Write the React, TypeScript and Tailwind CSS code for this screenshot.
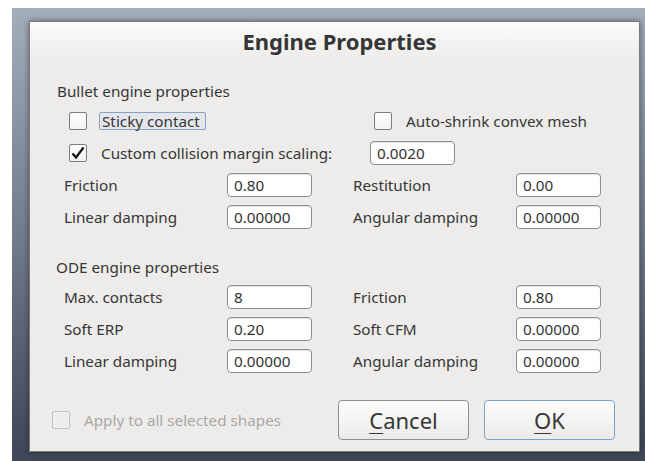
import React from "react";

const font = { fontFamily: '"Noto Sans", "Liberation Sans", sans-serif' };

function Check({ checked = false, disabled = false }: { checked?: boolean; disabled?: boolean }) {
  return (
    <div
      className={
        "w-[18px] h-[18px] rounded-[2px] border flex items-center justify-center shrink-0 " +
        (disabled
          ? "border-[#c4c3c1] bg-[#efeeec]"
          : "border-[#7d7d7d] bg-gradient-to-b from-[#ffffff] to-[#f1f1f1]")
      }
    >
      {checked && (
        <svg width="16" height="16" viewBox="0 0 16 16">
          <path d="M2.5 8.5 L6 12.5 L13.5 2.5" fill="none" stroke="#111" strokeWidth="2.2" strokeLinejoin="miter" />
        </svg>
      )}
    </div>
  );
}

function Field({ value }: { value: string }) {
  return (
    <div className="w-[85px] h-[24px] rounded-[4px] border border-[#8e8e8c] bg-white shadow-[inset_0_1px_1px_rgba(0,0,0,0.12)] flex items-center pl-[6px] pt-[1px] text-[15.25px] text-[#333]">
      {value}
    </div>
  );
}

function PairRow({ a, av, b, bv }: { a: string; av: string; b: string; bv: string }) {
  return (
    <div className="h-[32px] flex items-center pl-[34px]">
      <div className="w-[163px] pt-[1px]">{a}</div>
      <Field value={av} />
      <div className="w-[41px]" />
      <div className="w-[163px] pt-[1px]">{b}</div>
      <Field value={bv} />
    </div>
  );
}

export default function App() {
  return (
    <div className="w-[645px] h-[461px] bg-white pl-[12px] pt-[8px] overflow-hidden" style={font}>
      <div className="w-[633px] h-[453px] bg-gradient-to-b from-[#a3aebb] via-[#717c8c] to-[#3f4656] pl-[17px] pt-[13px]">
        <div className="w-[611px] h-[431px] flex flex-col border border-[#7a7a78] bg-[#edecea] shadow-[0_0_6px_rgba(0,0,0,0.45)] text-[15.25px] text-[#363636]">
          {/* title bar */}
          <div className="h-[38px] shrink-0 flex items-center justify-center pl-[10px] bg-gradient-to-b from-[#fbfbfb] to-[#edecea] text-[22px] font-bold text-[#363636]">
            Engine Properties
          </div>

          <div className="pt-[18px] flex flex-col">
            {/* Bullet */}
            <div className="h-[27px] flex items-center pl-[27px]">Bullet engine properties</div>
            <div className="h-[32px] flex items-center pl-[39px]">
              <Check />
              <div className="ml-[12px] w-[107px] h-[18px] rounded-[2px] border border-[#8aa3c4] bg-[#e3e7ec] flex items-center pl-[2px]">
                Sticky contact
              </div>
              <div className="w-[168px]" />
              <Check />
              <div className="ml-[14px]">Auto-shrink convex mesh</div>
            </div>
            <div className="h-[32px] flex items-center pl-[39px]">
              <Check checked />
              <div className="ml-[14px] w-[269px]">Custom collision margin scaling:</div>
              <Field value="0.0020" />
            </div>
            <PairRow a="Friction" av="0.80" b="Restitution" bv="0.00" />
            <PairRow a="Linear damping" av="0.00000" b="Angular damping" bv="0.00000" />

            {/* ODE */}
            <div className="h-[28px] mt-[20px] flex items-center pl-[26px]">ODE engine properties</div>
            <PairRow a="Max. contacts" av="8" b="Friction" bv="0.80" />
            <PairRow a="Soft ERP" av="0.20" b="Soft CFM" bv="0.00000" />
            <PairRow a="Linear damping" av="0.00000" b="Angular damping" bv="0.00000" />
          </div>

          {/* footer */}
          <div className="mt-auto mb-[11px] h-[40px] flex items-center pl-[22px] pr-[24px]">
            <Check disabled />
            <div className="ml-[14px] text-[#a9a8a6]">Apply to all selected shapes</div>
            <div className="flex-1" />
            <button className="w-[131px] h-[40px] rounded-[4px] border border-[#8f8f8d] bg-gradient-to-b from-[#fdfdfd] to-[#ebeae8] text-[22px] text-[#363636]">
              <span className="underline underline-offset-[4px] decoration-1">C</span>ancel
            </button>
            <button className="ml-[15px] w-[131px] h-[40px] rounded-[4px] border-[1.5px] border-[#7ba2d2] bg-gradient-to-b from-[#fdfdfd] to-[#ebeae8] text-[22px] text-[#363636]">
              <span className="underline underline-offset-[4px] decoration-1">O</span>K
            </button>
          </div>
        </div>
      </div>
    </div>
  );
}
